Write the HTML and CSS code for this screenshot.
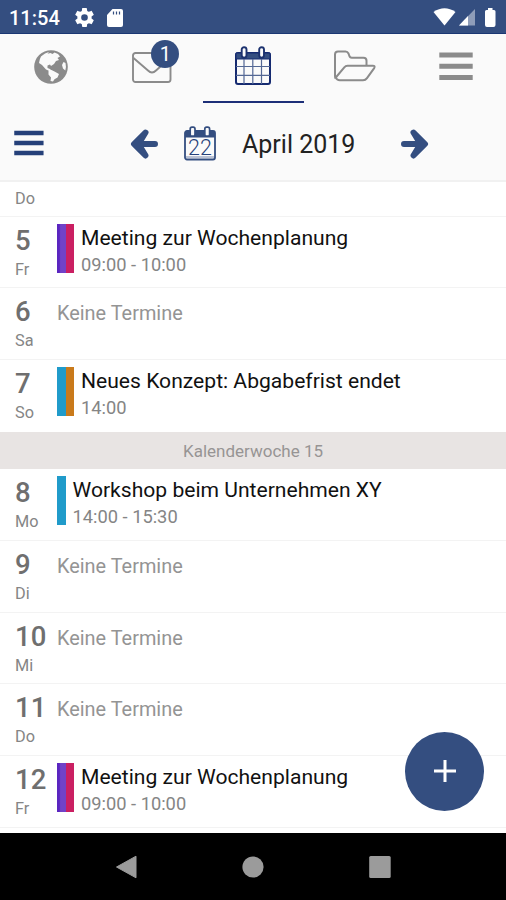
FILE: index.html
```html
<!DOCTYPE html>
<html lang="de">
<head>
<meta charset="utf-8">
<title>Kalender</title>
<link rel="stylesheet" href="styles.css">
</head>
<body>
<div class="phone">
  <header class="status">
    <span class="clock">11:54</span>
    <svg class="status-gear" viewBox="2 2 20 20"><path fill="#fff" d="M19.43 12.98c.04-.32.07-.64.07-.98s-.03-.66-.07-.98l2.11-1.65c.19-.15.24-.42.12-.64l-2-3.46c-.12-.22-.39-.3-.61-.22l-2.49 1c-.52-.4-1.08-.73-1.69-.98l-.38-2.65A.49.49 0 0 0 14 2h-4c-.25 0-.46.18-.49.42l-.38 2.65c-.61.25-1.17.59-1.69.98l-2.49-1c-.23-.09-.49 0-.61.22l-2 3.46c-.13.22-.07.49.12.64l2.11 1.65c-.04.32-.07.65-.07.98s.03.66.07.98l-2.11 1.65c-.19.15-.24.42-.12.64l2 3.46c.12.22.39.3.61.22l2.49-1c.52.4 1.08.73 1.69.98l.38 2.65c.03.24.24.42.49.42h4c.25 0 .46-.18.49-.42l.38-2.65c.61-.25 1.17-.59 1.69-.98l2.49 1c.23.09.49 0 .61-.22l2-3.46c.12-.22.07-.49-.12-.64zM12 15.5a3.5 3.5 0 1 1 0-7 3.5 3.5 0 0 1 0 7z"/></svg>
    <svg class="status-card" viewBox="0 0 16 18"><path fill="#fff" d="M5.5 0H14q2 0 2 2v14q0 2-2 2H2q-2 0-2-2V6z"/><path stroke="#344e80" stroke-width="1.2" d="M6.500 2.500v3M9.500 2.500v3M12.500 2.500v3"/></svg>
    <svg class="status-right" viewBox="0 0 66 22"><path fill="#fff" d="M1.500 5Q12.500 -2.500 23.500 5L12.500 18.500z"/><path fill="#fff" opacity=".45" d="M43 2v16.500H27z"/><path fill="#fff" d="M36 9v9.500H27z"/><path fill="#fff" d="M56 1h4.500v2h1.500q1.500 0 1.500 1.500V18q0 2-2 2H55q-2 0-2-2V4.500Q53 3 54.500 3H56z"/></svg>
  </header>

  <nav class="tabs">
    <div class="tab">
      <svg class="globe" viewBox="0 0 34 34"><circle cx="17" cy="17" r="16.800" fill="#8b8b8b"/><path fill="#fafafa" d="M7 6.500Q11 2.500 15 2l-1.500 1.800 3-.8 2 1 2-1.500 3.500 1.500 2 2.500-2.500 1.500 1.500 2-3 1-2 3-3 2-1-1.500-2.500 1 0 2.500 2.500 1 1.500 1.500-2 .5-3.500-1.500-4-4.500L5 13q.5-4 2-6.500zM14.500 20.500l3-.5 3 1.500 4.500 2.500-1.500 3.500-3 1.800-1.500 2.200-2.500-.5.500-3.500-2.500-3zM29.500 12l2 1q1 4-.2 7.500l-2.300-2-1-3.500z"/></svg>
    </div>
    <div class="tab">
      <div class="mail-wrap">
        <svg class="mail" viewBox="0 0 40 32"><g fill="none" stroke="#8b8b8b" stroke-width="1.900" stroke-linejoin="round"><rect x="1" y="1" width="37.500" height="29" rx="2.500"/><path d="M1.500 6L16 18.500q4 4 8 0L38 6"/></g></svg>
        <span class="badge">1</span>
      </div>
    </div>
    <div class="tab tab-active">
      <svg class="cal" viewBox="0 0 36 39"><rect x="1" y="7" width="34" height="31" rx="2" fill="#fafafa" stroke="#152a70" stroke-width="2"/><path fill="#344e80" stroke="#152a70" d="M1 7h34v6H1z"/><path stroke="#536794" stroke-width="1.200" d="M9 13v25M17.800 13v25M26.500 13v25M1 20.500h34M1 29.300h34"/><g fill="#fafafa" stroke="#1c326f" stroke-width="1.900"><rect x="6.700" y="1.200" width="4.800" height="10.500" rx="2.400"/><rect x="24.200" y="1.200" width="4.800" height="10.500" rx="2.400"/></g></svg>
    </div>
    <div class="tab">
      <svg class="folder" viewBox="0 0 43 32"><path fill="none" stroke="#8b8b8b" stroke-width="2" stroke-linejoin="round" d="M2.500 28.500Q2 27.500 2 26V4.500Q2 1.500 5 1.500H12.500q2 0 3 2l.7 2q.6 2.200 2.500 2.200H30.500q3 0 3 3v5H14.500q-2 0-3 1.500L2.800 27.500q1 2.800 4 2.800H30q2.500 0 4-2.200l7.200-10q1.300-2.400-1.400-2.400h-6.300"/></svg>
    </div>
    <div class="tab">
      <svg class="more" viewBox="0 0 34 28"><path fill="none" stroke="#8b8b8b" stroke-width="5" stroke-linecap="square" d="M2.800 3h28.400M2.800 14.200h28.400M2.800 25.500h28.400"/></svg>
    </div>
  </nav>

  <section class="month-bar">
    <svg class="menu" viewBox="0 0 30 26"><path fill="none" stroke="#254079" stroke-width="4.500" stroke-linecap="square" d="M2.500 3h24.800M2.500 13h24.800M2.500 23h24.800"/></svg>
    <svg class="arrow" viewBox="0 0 28 30"><path fill="#344e80" stroke="#344e80" stroke-width="6" stroke-linecap="round" stroke-linejoin="round" d="M15.500 3.500L4 15l11.500 11.500L8.500 15H25H8.500z"/></svg>
    <svg class="today" viewBox="0 0 32 35"><rect x="1" y="5" width="30" height="28.500" rx="2" fill="#fafafa" stroke="#344e80" stroke-width="1.800"/><path fill="#344e80" d="M1 5h30v6.500H1z"/><path stroke="#8f9bb9" stroke-width="1.200" d="M2 31h28"/><g fill="#fafafa" stroke="#344e80" stroke-width="1.700"><rect x="6.200" y="1.200" width="4.800" height="9" rx="1.800"/><rect x="20.800" y="1.200" width="4.800" height="9" rx="1.800"/></g><text class="today-num" x="16" y="29" text-anchor="middle">22</text></svg>
    <h1 class="month">April 2019</h1>
    <svg class="arrow arrow-next" viewBox="0 0 28 30"><path fill="#344e80" stroke="#344e80" stroke-width="6" stroke-linecap="round" stroke-linejoin="round" d="M12.500 3.500L24 15L12.500 26.500L19.500 15H3H19.500z"/></svg>
  </section>

  <main class="agenda">
    <div class="row row-cut"><span class="weekday">Do</span></div>
    <div class="row"><div class="date"><b class="day">5</b><span class="weekday">Fr</span></div><div class="event"><i class="bar purple"></i><i class="bar pink"></i><div class="info"><div class="title">Meeting zur Wochenplanung</div><div class="time">09:00 - 10:00</div></div></div></div>
    <div class="row"><div class="date"><b class="day">6</b><span class="weekday">Sa</span></div><div class="none">Keine Termine</div></div>
    <div class="row row-last"><div class="date"><b class="day">7</b><span class="weekday">So</span></div><div class="event"><i class="bar blue"></i><i class="bar orange"></i><div class="info"><div class="title">Neues Konzept: Abgabefrist endet</div><div class="time">14:00</div></div></div></div>
    <div class="week">Kalenderwoche 15</div>
    <div class="row"><div class="date"><b class="day">8</b><span class="weekday">Mo</span></div><div class="event"><i class="bar blue"></i><div class="info"><div class="title">Workshop beim Unternehmen XY</div><div class="time">14:00 - 15:30</div></div></div></div>
    <div class="row"><div class="date"><b class="day">9</b><span class="weekday">Di</span></div><div class="none">Keine Termine</div></div>
    <div class="row"><div class="date"><b class="day">10</b><span class="weekday">Mi</span></div><div class="none">Keine Termine</div></div>
    <div class="row"><div class="date"><b class="day">11</b><span class="weekday">Do</span></div><div class="none">Keine Termine</div></div>
    <div class="row"><div class="date"><b class="day">12</b><span class="weekday">Fr</span></div><div class="event"><i class="bar purple"></i><i class="bar pink"></i><div class="info"><div class="title">Meeting zur Wochenplanung</div><div class="time">09:00 - 10:00</div></div></div></div>
  </main>

  <div class="fab"><svg class="plus" viewBox="0 0 22 22"><path stroke="#fff" stroke-width="3" d="M11 0v22M0 11h22"/></svg></div>

  <footer class="system">
    <svg viewBox="0 0 24 24"><path fill="#9b9b9b" stroke="#9b9b9b" stroke-linejoin="round" d="M1.500 12L21 1.200v21.600z"/></svg>
    <svg viewBox="0 0 24 24"><circle cx="12" cy="12" r="10.600" fill="#9b9b9b"/></svg>
    <svg viewBox="0 0 24 24"><rect x="1.200" y="1" width="21.500" height="22" rx="1.500" fill="#9b9b9b"/></svg>
  </footer>
</div>
</body>
</html>
```
FILE: styles.css
```css
* { box-sizing: border-box; }
body { margin: 0; font-family: Roboto, "Liberation Sans", sans-serif; background: #fff; }
svg { display: block; flex: none; }
.phone { position: relative; width: 506px; height: 900px; overflow: hidden; display: flex; flex-direction: column; }

.status { height: 34px; flex: none; background: #344e80; border-bottom: 1px solid #1b3773; display: flex; align-items: center; padding: 2px 8px 0 9px; color: #fff; }
.clock { width: 66px; font-size: 20px; font-weight: 500; }
.status-gear { width: 19px; height: 19px; }
.status-card { width: 16px; height: 18px; margin-left: 13px; }
.status-right { width: 66px; height: 22px; margin-left: auto; }

.tabs { height: 69px; flex: none; display: grid; grid-template-columns: repeat(5, 1fr); background: #fafafa; }
.tab { display: flex; justify-content: center; align-items: center; padding: 0 0 2px 1px; border-bottom: 2px solid transparent; }
.tab-active { border-color: #1d2f78; margin: 0 0 0 1px; padding: 0 1px 4px 0; }
.globe { width: 34px; height: 34px; }
.mail-wrap { position: relative; margin-top: 3px; }
.mail { width: 40px; height: 32px; }
.badge { position: absolute; left: 19px; top: -12px; width: 28px; height: 28px; border-radius: 50%; background: #344e80; color: #fff; font-size: 20px; line-height: 29px; text-align: center; }
.cal { width: 36px; height: 39px; }
.folder { width: 43px; height: 32px; margin-top: -2px; }
.more { width: 34px; height: 28px; margin: -1px 0 0 1px; }

.month-bar { height: 79px; flex: none; display: flex; align-items: center; background: #fafafa; border-bottom: 2px solid #f1f1f1; padding: 4px 14px 0; }
.menu { width: 30px; height: 26px; margin-top: -1px; }
.arrow { width: 28px; height: 30px; margin-left: 86px; }
.today { width: 32px; height: 35px; margin-left: 26px; }
.today-num { font-size: 21.500px; font-weight: 300; fill: #254079; }
.month { width: 114px; margin: 2px 0 0 26px; font-size: 25px; line-height: 30px; font-weight: 400; white-space: nowrap; color: #222; }
.arrow-next { margin-left: 45px; }

.agenda { height: 651px; flex: none; background: #fff; overflow: hidden; }
.row { height: 71.700px; display: flex; padding: 7px 0 0 15px; border-bottom: 1.500px solid #f3f3f3; }
.row-cut { height: 34.700px; padding-top: 5px; }
.row-last { border-bottom: 0; }
.date { width: 42px; flex: none; }
.day { display: block; height: 34px; font-size: 27.500px; line-height: 33px; font-weight: 500; color: #6f6f6f; }
.weekday { display: block; font-size: 16.300px; line-height: 24px; color: #858585; }
.event { display: flex; }
.bar { width: 8.500px; height: 49px; }
.purple { background: linear-gradient(90deg, #5a25c0 25%, #7142c8 40%); }
.pink { background: #ca1f62; }
.blue { background: #209bca; }
.orange { background: #c97a1b; }
.info { margin-left: 7px; white-space: nowrap; }
.title { font-size: 21.100px; line-height: 28px; color: #111; }
.time { font-size: 18.300px; line-height: 25px; color: #858585; }
.none { font-size: 19.900px; line-height: 38px; color: #949494; }
.week { height: 37.500px; background: #e8e4e3; color: #979494; text-align: center; font-size: 17px; line-height: 38px; }

.fab { position: absolute; left: 405px; top: 731.500px; width: 79px; height: 79px; border-radius: 50%; background: #344e80; display: flex; align-items: center; justify-content: center; }
.plus { width: 22px; height: 22px; }
.system { height: 67px; flex: none; background: #000; display: flex; align-items: center; justify-content: center; gap: 102.500px; }
.system svg { width: 24px; height: 24px; }
```
